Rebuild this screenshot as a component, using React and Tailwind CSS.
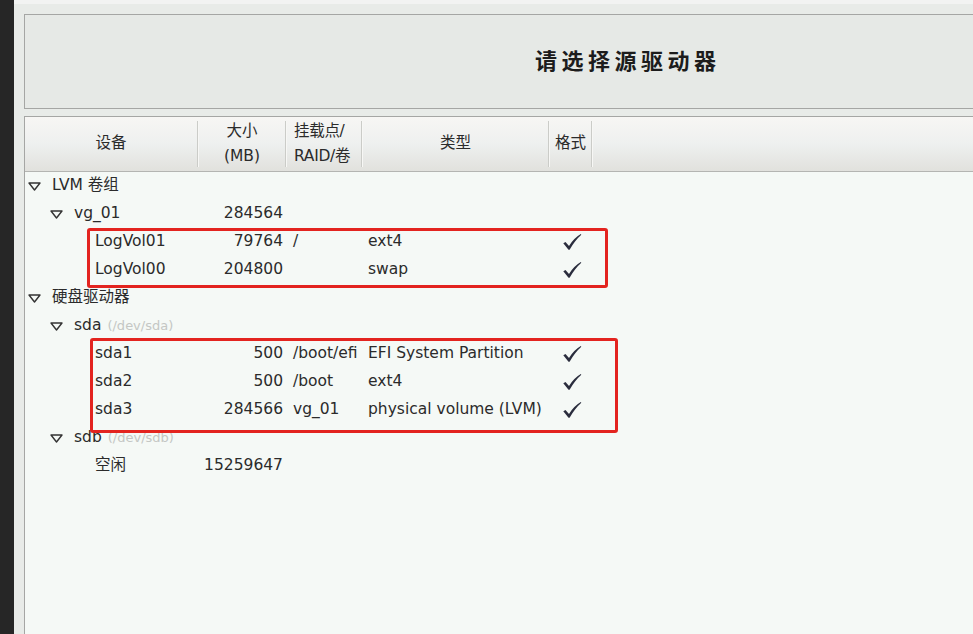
import React from "react";

const FONT = { fontFamily: '"DejaVu Sans", "Noto Sans CJK SC", sans-serif' };

function Tri() {
  return (
    <svg width="13" height="9" viewBox="0 0 13 9" className="shrink-0">
      <polygon points="1,1 12,1 6.5,8" fill="none" stroke="#333" strokeWidth="1.4" strokeLinejoin="round" />
    </svg>
  );
}

function Check() {
  return (
    <svg width="20" height="18" viewBox="0 0 20 18">
      <path d="M1.3 10.2 L3.5 9 L7 13 Q11.5 5.3 18.8 1 L19.3 1.8 Q12.8 7.6 7.6 16.8 L6.5 16.8 Z" fill="#2a2d3d" />
    </svg>
  );
}

const rows = [
  { level: 0, name: "LVM 卷组", exp: true },
  { level: 1, name: "vg_01", exp: true, size: "284564" },
  { level: 2, name: "LogVol01", size: "79764", mount: "/", type: "ext4", fmt: true },
  { level: 2, name: "LogVol00", size: "204800", type: "swap", fmt: true },
  { level: 0, name: "硬盘驱动器", exp: true },
  { level: 1, name: "sda", dim: "(/dev/sda)", exp: true },
  { level: 2, name: "sda1", size: "500", mount: "/boot/efi", type: "EFI System Partition", fmt: true },
  { level: 2, name: "sda2", size: "500", mount: "/boot", type: "ext4", fmt: true },
  { level: 2, name: "sda3", size: "284566", mount: "vg_01", type: "physical volume (LVM)", fmt: true },
  { level: 1, name: "sdb", dim: "(/dev/sdb)", exp: true },
  { level: 2, name: "空闲", size: "15259647" },
];

function Row({ r }) {
  const pad = r.level === 0 ? "pl-[3px]" : r.level === 1 ? "pl-[25px]" : "pl-[70px]";
  return (
    <div className="flex h-[28px] items-center text-[15.5px] text-[#2b2b2b]">
      <div className={`w-[174px] shrink-0 flex items-center ${pad}`}>
        {r.exp && (
          <span className="mr-[11px] flex items-center">
            <Tri />
          </span>
        )}
        <span className="whitespace-nowrap">{r.name}</span>
        {r.dim && <span className="ml-[6px] text-[13px] text-[#c4c7c4] whitespace-nowrap">{r.dim}</span>}
      </div>
      <div className="w-[88px] shrink-0 text-right pr-[4px] whitespace-nowrap">{r.size}</div>
      <div className="w-[76px] shrink-0 pl-[6px] whitespace-nowrap overflow-visible">{r.mount}</div>
      <div className="w-[187px] shrink-0 pl-[5px] whitespace-nowrap">{r.type}</div>
      <div className="w-[43px] shrink-0 flex justify-center">{r.fmt && <Check />}</div>
    </div>
  );
}

function Sep() {
  return <div className="w-[2px] self-stretch my-[4px] border-l border-[#cbccc8] bg-[#f7f7f5] shrink-0" />;
}

export default function App() {
  return (
    <div className="relative w-[973px] h-[634px] flex overflow-hidden" style={FONT}>
      <div className="w-[14px] shrink-0 bg-[#262626]" />
      <div className="flex-1 flex flex-col bg-[#e8ebe8]">
        <div className="h-[4px] bg-[#f2f3f2]" />
        <div className="flex-1 flex flex-col pt-[10px] pl-[10px]">
          <div className="h-[95px] shrink-0 border-l border-t border-b border-[#a5a6a4] bg-[#e6e9e6] flex items-center pl-[510px]">
            <span className="text-[22px] font-bold tracking-[4.5px] text-[#1c1c1c] whitespace-nowrap">请选择源驱动器</span>
          </div>
          <div className="h-[7px] shrink-0" />
          <div className="flex-1 flex flex-col border-l border-t border-[#a5a6a4] bg-[#f5f9f6]">
            <div className="h-[55px] shrink-0 flex border-b border-[#b4b5b2] bg-gradient-to-b from-[#f7f6f4] via-[#eef0ef] to-[#e1e1dd] text-[15.5px] text-[#2b2b2b]">
              <div className="w-[172px] shrink-0 flex items-center justify-center">设备</div>
              <Sep />
              <div className="w-[86px] shrink-0 flex flex-col items-center justify-center leading-[25px]">
                <span>大小</span>
                <span>(MB)</span>
              </div>
              <Sep />
              <div className="w-[74px] shrink-0 flex flex-col justify-center pl-[7px] leading-[25px] whitespace-nowrap tracking-[-0.3px]">
                <span>挂载点/</span>
                <span>RAID/卷</span>
              </div>
              <Sep />
              <div className="w-[185px] shrink-0 flex items-center justify-center">类型</div>
              <Sep />
              <div className="w-[41px] shrink-0 flex items-center justify-center">格式</div>
              <Sep />
              <div className="flex-1" />
            </div>
            <div className="flex flex-col">
              {rows.map((r, i) => (
                <Row key={i} r={r} />
              ))}
            </div>
          </div>
        </div>
      </div>
      <div className="absolute left-[87px] top-[228px] w-[521px] h-[60px] border-[3px] border-[#e3241f] rounded-[3px]" />
      <div className="absolute left-[90px] top-[338px] w-[528px] h-[95px] border-[3px] border-[#e3241f] rounded-[3px]" />
    </div>
  );
}
